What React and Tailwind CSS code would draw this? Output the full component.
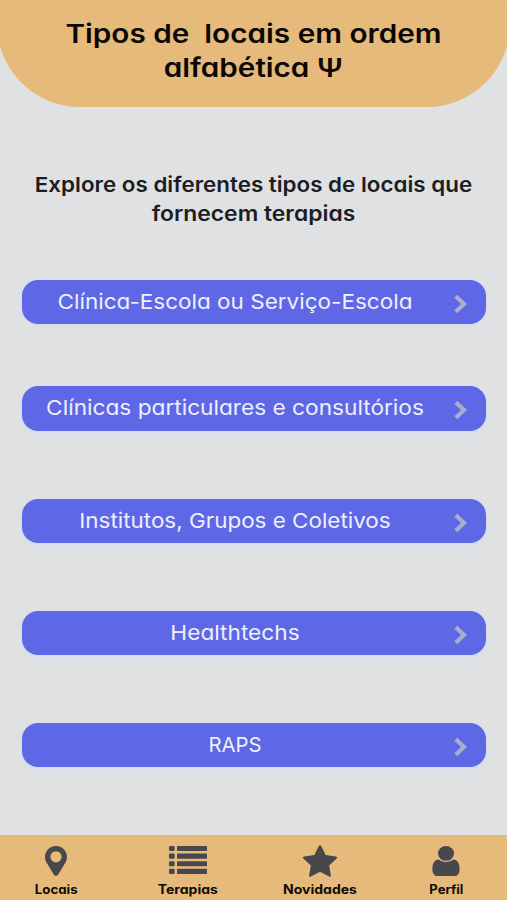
const places = [
  { label: "Clínica-Escola ou Serviço-Escola", gap: "mb-[62px]", text: "scale-x-[1.098]" },
  { label: "Clínicas particulares e consultórios", gap: "mb-[68px]", text: "scale-x-[1.105]" },
  { label: "Institutos, Grupos e Coletivos", gap: "mb-[68px]", text: "scale-x-[1.094]" },
  { label: "Healthtechs", gap: "mb-[68px]", text: "scale-x-[1.105]" },
  { label: "RAPS", gap: "", text: "scale-x-[0.99]" },
];

const Chevron = () => (
  <svg viewBox="0 0 14 20" className="w-[14px] h-5" fill="none" stroke="#a9afcb" strokeWidth="4.2">
    <path d="M1.800 2.200 10 10 1.800 17.800" />
  </svg>
);

const PinIcon = () => (
  <svg viewBox="0 0 22 30" className="w-[22px] h-[30px]" fill="#48484c">
    <path
      fillRule="evenodd"
      d="M11 0C4.9 0 0 4.9 0 11c0 2 .5 3.400 1.200 4.900l7.600 12.700c1 1.800 3.400 1.800 4.400 0l7.600-12.700C21.500 14.400 22 13 22 11 22 4.900 17.100 0 11 0Zm0 5.200a5.600 5.600 0 1 1 0 11.200 5.600 5.600 0 0 1 0-11.200Z"
    />
  </svg>
);

const ListIcon = () => (
  <svg viewBox="0 0 38 28" className="w-[38px] h-7 -mt-0.5" fill="#48484c">
    {[0, 7.6, 15.2, 22.8].map((y) => (
      <g key={y}>
        <rect x="0" y={y} width="5.6" height="5.1" rx="1" />
        <rect x="8" y={y} width="30" height="5.1" rx="0.6" />
      </g>
    ))}
  </svg>
);

const StarIcon = () => (
  <svg viewBox="0 0 36 32" className="w-9 h-8 -mt-px" fill="#48484c">
    <path d="M16.700 1.200c.6-1.300 2-1.300 2.600 0l4.300 8.900 10.300 1.300c1.300.2 1.700 1.300.7 2.200l-7.400 7 1.700 9.800c.2 1.200-.7 1.700-1.800 1.200L18 26.800l-9.100 4.800c-1.100.5-2 0-1.800-1.200l1.700-9.800-7.400-7c-1-.9-.6-2 .7-2.200l10.300-1.300z" />
  </svg>
);

const UserIcon = () => (
  <svg viewBox="0 0 28 30" className="w-7 h-[30px]" fill="#48484c">
    <ellipse cx="14" cy="7.4" rx="8" ry="7.4" />
    <path d="M6.600 13.600C2.400 13.800.4 17.600.4 23.400.4 27.400 2.500 30 5.600 30h16.800c3.100 0 5.200-2.600 5.200-6.600 0-5.800-2-9.600-6.200-9.800-2 1.500-4.400 2.400-7.400 2.400s-5.400-.9-7.400-2.400Z" />
  </svg>
);

const tabs = [
  { label: "Locais", icon: PinIcon, box: "ml-[16px] w-20", text: "scale-x-[1.06]" },
  { label: "Terapias", icon: ListIcon, box: "ml-[42px] w-[100px]", text: "scale-x-[1.12]" },
  { label: "Novidades", icon: StarIcon, box: "ml-[32px] w-[100px]", text: "scale-x-[1.12]" },
  { label: "Perfil", icon: UserIcon, box: "ml-[36px] w-20", text: "scale-x-[1.04]" },
];

const App = () => {
  return (
    <div className="flex flex-col w-[507px] h-[900px] overflow-hidden bg-[#dfe1e3] font-['Inter',sans-serif] [font-feature-settings:'cv11']">
      {/* Header */}
      <header className="shrink-0 -mt-[59px] -mx-[3px] h-[166px] pt-[76px] rounded-full bg-[#e5ba7a] text-center">
        <h1 className="text-[26px] leading-[34px] font-semibold text-[#0c0805] whitespace-pre">
          <span className="block scale-x-[1.143]">{"Tipos de  locais em ordem"}</span>
          <span className="block scale-x-[1.14]">alfabética Ψ</span>
        </h1>
      </header>

      <h2 className="mt-[63px] text-center text-[20.500px] leading-[29px] font-semibold text-[#1b1d22] whitespace-nowrap">
        <span className="block scale-x-[1.092]">Explore os diferentes tipos de locais que</span>
        <span className="block scale-x-[1.115]">fornecem terapias</span>
      </h2>

      {/* Place types */}
      <main className="flex-1 mt-[52px] pl-[22px] pr-[21px]">
        {places.map((place) => (
          <button
            key={place.label}
            className={`flex items-center w-full h-[44.300px] pr-[17px] rounded-[16px] bg-[#5e67e6] shadow-[0_1px_2px_1px_#d8dcf2] ${place.gap}`}
          >
            <span className="w-[426px] text-center text-[20.500px] leading-[44px] text-[#eef0fd] whitespace-nowrap">
              <span className={`block ${place.text}`}>{place.label}</span>
            </span>
            <span className="mt-[4px] ml-[6px]">
              <Chevron />
            </span>
          </button>
        ))}
      </main>

      {/* Bottom navigation */}
      <nav className="flex shrink-0 h-[65px] bg-[#e5ba7a]">
        {tabs.map((tab) => (
          <div key={tab.label} className={`flex flex-col items-center shrink-0 ${tab.box}`}>
            <div className="flex items-center h-[32px] mt-[10px]">
              <tab.icon />
            </div>
            <span className={`mt-[5px] text-[12.500px] leading-4 font-bold text-[#0f0a06] ${tab.text}`}>
              {tab.label}
            </span>
          </div>
        ))}
      </nav>
    </div>
  );
};

export default App;
